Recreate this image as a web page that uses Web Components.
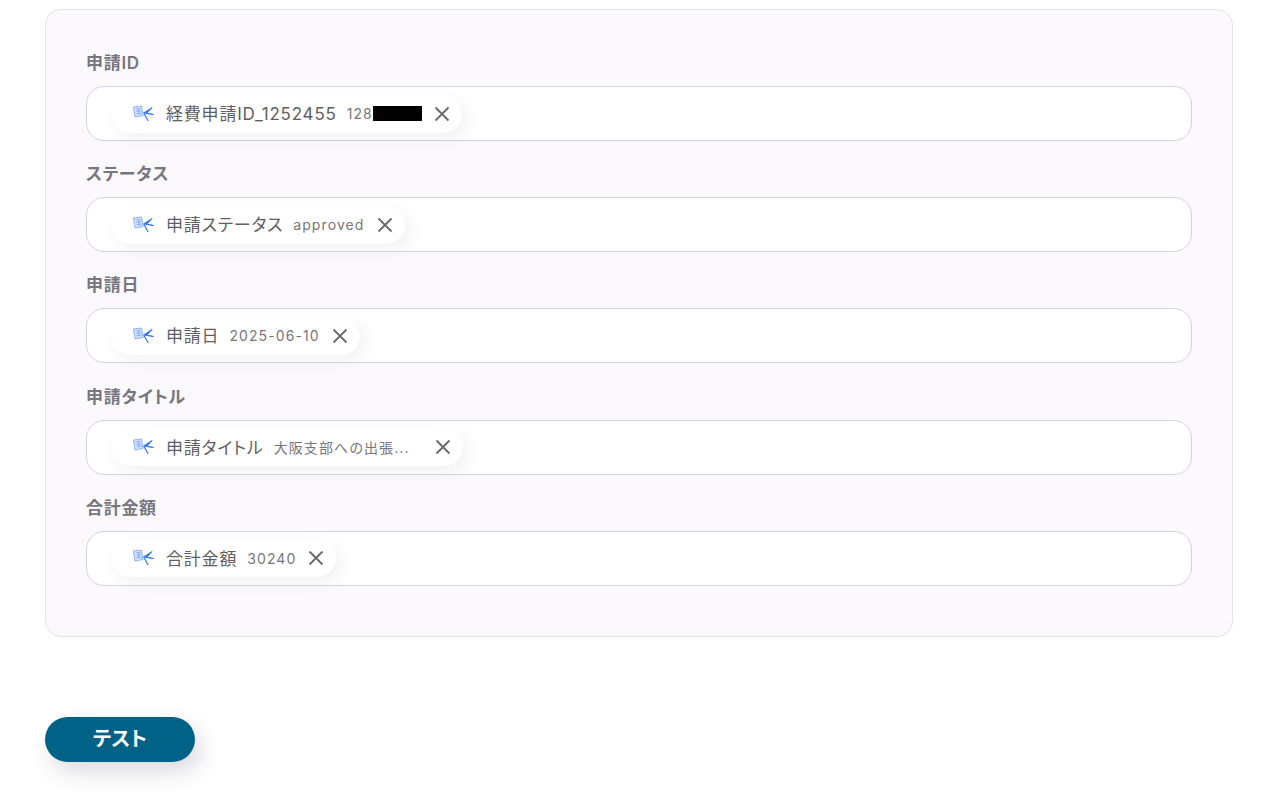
<!DOCTYPE html>
<html lang="ja">
<head>
<meta charset="utf-8">
<title>テスト</title>
<style>
  html, body { margin: 0; background: #fff; }
  body { font-family: Inter, "Noto Sans CJK JP", sans-serif; height: 802px; overflow: hidden; font-feature-settings: "palt"; }
  .page { padding: 9px 39px 0 45px; }
</style>
</head>
<body>
<div class="page">
  <form-panel>
    <form-field label="申請ID"><value-chip name="経費申請ID_1252455" value="128" masked></value-chip></form-field>
    <form-field label="ステータス"><value-chip name="申請ステータス" value="approved"></value-chip></form-field>
    <form-field label="申請日"><value-chip name="申請日" value="2025-06-10"></value-chip></form-field>
    <form-field label="申請タイトル"><value-chip name="申請タイトル" value="大阪支部への出張..." value-width="149.5"></value-chip></form-field>
    <form-field label="合計金額"><value-chip name="合計金額" value="30240"></value-chip></form-field>
  </form-panel>
  <test-button>テスト</test-button>
</div>
<script>
class FormPanel extends HTMLElement {
  constructor() {
    super();
    this.attachShadow({ mode: 'open' });
    this.shadowRoot.innerHTML = `
      <style>
        :host {
          display: flex;
          flex-direction: column;
          gap: 12px;
          box-sizing: border-box;
          height: 628px;
          padding: 40px 40px 0;
          background: #fbf9fc;
          border: 1px solid #e2e2ea;
          border-radius: 16px;
        }
      </style>
      <slot></slot>
    `;
  }
}
class FormField extends HTMLElement {
  constructor() {
    super();
    this.attachShadow({ mode: 'open' });
  }
  connectedCallback() {
    this.shadowRoot.innerHTML = `
      <style>
        :host { display: block; height: 99.2px; }
        .label {
          height: 24px;
          margin-bottom: 12px;
          font-size: 17px;
          line-height: 26px;
          font-weight: 600;
          letter-spacing: 0.7px;
          color: #77757d;
        }
        .box {
          display: flex;
          align-items: center;
          box-sizing: border-box;
          height: 55px;
          padding-left: 25px;
          background: #fff;
          border: 1px solid #d3d3e0;
          border-radius: 18px;
        }
      </style>
      <div class="label">${this.getAttribute('label')}</div>
      <div class="box"><slot></slot></div>
    `;
  }
}
class ValueChip extends HTMLElement {
  constructor() {
    super();
    this.attachShadow({ mode: 'open' });
  }
  connectedCallback() {
    const masked = this.hasAttribute('masked') ? '<span class="mask"></span>' : '';
    const valueWidth = this.getAttribute('value-width');
    this.shadowRoot.innerHTML = `
      <style>
        :host {
          display: inline-flex;
          align-items: center;
          box-sizing: border-box;
          height: 38px;
          padding: 0 12px 0 20px;
          background: #fff;
          border-radius: 19px;
          box-shadow: 5px 6px 16px rgba(60, 50, 90, 0.07);
        }
        svg.logo { width: 20px; height: 20px; margin-right: 14px; flex: none; overflow: visible; }
        .name { position: relative; top: -1px; font-size: 17px; letter-spacing: 0.8px; color: #5f5e64; white-space: nowrap; }
        .value { display: inline-flex; align-items: center; margin-left: 10px; font-size: 14px; letter-spacing: 1.1px; color: #77767c; white-space: nowrap; ${valueWidth ? `width: ${valueWidth}px;` : ''} }
        .mask { display: inline-block; width: 49px; height: 15px; background: #000; }
        svg.close { width: 16px; height: 16px; margin-left: 12px; flex: none; }
      </style>
      <svg class="logo" viewBox="0 0 20 20" aria-hidden="true">
        <path d="M1.5 3 L9.5 2 L11 11.5 L3 13 Z" fill="#d3e1fc" stroke="#8fb2f5" stroke-width="1"/>
        <path d="M3.8 5 L8.5 4.4 M4.2 7.4 L9 6.7 M4.6 9.8 L9.4 9.1 M6.4 4.8 L7.2 10" stroke="#7aa4f1" stroke-width="0.8"/>
        <path d="M20 3.5 L11.5 9 L21.5 10.5 L15 9.2 Z" fill="#3d7bea" stroke="#3d7bea" stroke-width="1" stroke-linejoin="round"/>
        <path d="M12 9.5 L16.2 17" stroke="#3d7bea" stroke-width="1.3" fill="none"/>
      </svg>
      <span class="name">${this.getAttribute('name')}</span>
      <span class="value">${this.getAttribute('value')}${masked}</span>
      <svg class="close" viewBox="0 0 16 16" aria-hidden="true">
        <path d="M1.5 1.5 L14.5 14.5 M14.5 1.5 L1.5 14.5" stroke="#69686d" stroke-width="1.8" fill="none"/>
      </svg>
    `;
  }
}
class TestButton extends HTMLElement {
  constructor() {
    super();
    this.attachShadow({ mode: 'open' });
    this.shadowRoot.innerHTML = `
      <style>
        :host {
          display: flex;
          align-items: center;
          justify-content: center;
          box-sizing: border-box;
          width: 150px;
          height: 45px;
          margin-top: 80px;
          padding-bottom: 4px;
          background: #006287;
          border-radius: 23px;
          box-shadow: 6px 10px 22px rgba(40, 40, 70, 0.16);
          color: #fff;
          font-size: 20px;
          font-weight: 700;
        }
      </style>
      <slot></slot>
    `;
  }
}
customElements.define('form-panel', FormPanel);
customElements.define('form-field', FormField);
customElements.define('value-chip', ValueChip);
customElements.define('test-button', TestButton);
</script>
</body>
</html>
